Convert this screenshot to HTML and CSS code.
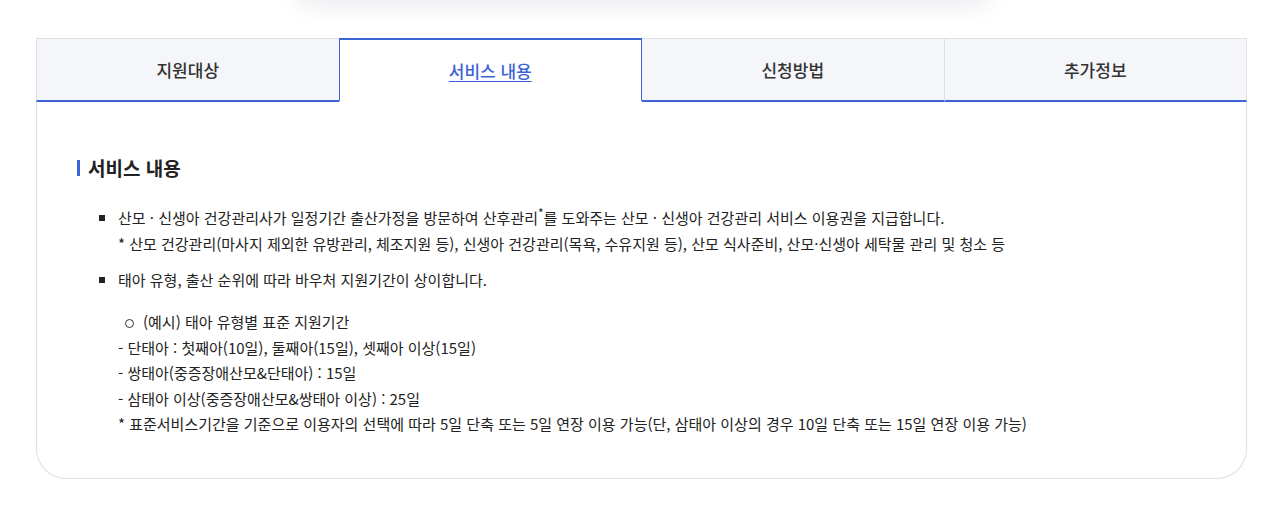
FILE: index.html
```html
<!DOCTYPE html>
<html lang="ko">

<head>
    <meta charset="UTF-8">
    <meta name="viewport" content="width=device-width, initial-scale=1.0">
    <title>서비스 내용</title>
    <link rel="stylesheet" href="styles.css">
</head>

<body>
    <div class="top-shadow"></div>

    <div class="tab-box">
        <ul class="tabs">
            <li class="tab">지원대상</li>
            <li class="tab on"><a href="#">서비스 내용</a></li>
            <li class="tab">신청방법</li>
            <li class="tab">추가정보</li>
        </ul>

        <div class="tab-cont">
            <h3 class="cont-title">서비스 내용</h3>
            <ul class="dot-list">
                <li>
                    산모 · 신생아 건강관리사가 일정기간 출산가정을 방문하여 산후관리<sup>*</sup>를 도와주는 산모 · 신생아 건강관리 서비스 이용권을 지급합니다.<br>
                    * 산모 건강관리(마사지 제외한 유방관리, 체조지원 등), 신생아 건강관리(목욕, 수유지원 등), 산모 식사준비, 산모·신생아 세탁물 관리 및 청소 등
                </li>
                <li>
                    태아 유형, 출산 순위에 따라 바우처 지원기간이 상이합니다.
                    <ul class="circle-list">
                        <li>(예시) 태아 유형별 표준 지원기간</li>
                    </ul>
                    <p>- 단태아 : 첫째아(10일), 둘째아(15일), 셋째아 이상(15일)</p>
                    <p>- 쌍태아(중증장애산모&amp;단태아) : 15일</p>
                    <p>- 삼태아 이상(중증장애산모&amp;쌍태아 이상) : 25일</p>
                    <p>* 표준서비스기간을 기준으로 이용자의 선택에 따라 5일 단축 또는 5일 연장 이용 가능(단, 삼태아 이상의 경우 10일 단축 또는 15일 연장 이용 가능)</p>
                </li>
            </ul>
        </div>
    </div>
</body>

</html>
```

FILE: styles.css
```css
* {
    box-sizing: border-box;
}

body {
    margin: 0;
    background: #fff;
    color: #222;
    font-family: "Noto Sans CJK KR", "Noto Sans", sans-serif;
    font-size: 15px;
}

/* shadow of the box that sits above */
.top-shadow {
    width: 700px;
    height: 40px;
    margin: -40px auto 0;
    border-radius: 20px;
    box-shadow: 0 6px 22px rgba(40, 40, 90, 0.09);
}

.tab-box {
    width: 1211px;
    margin: 38px 0 0 36px;
}

.tabs {
    display: flex;
    margin: 0;
    padding: 0;
    list-style: none;
}

.tab {
    flex: 1;
    height: 64px;
    display: flex;
    align-items: center;
    justify-content: center;
    background: #f5f6fa;
    border-top: 1px solid #dddfe3;
    border-left: 1px solid #dddfe3;
    border-bottom: 2px solid #3d63d8;
    color: #333;
    font-size: 17px;
    font-weight: 500;
}

.tab:last-child {
    border-right: 1px solid #dddfe3;
}

.tab.on {
    background: #fff;
    border: 1px solid #3d63d8;
    border-top-width: 2px;
    border-bottom: 2px solid #fff;
}

.tab.on + .tab {
    border-left: 0;
}

.tab.on a {
    color: #3d63d8;
    text-decoration: underline;
    text-underline-offset: 3px;
}

.tab-cont {
    border: 1px solid #dddfe3;
    border-top: 0;
    border-radius: 0 0 30px 30px;
    padding: 53px 40px 31px;
}

.cont-title {
    position: relative;
    margin: 0 0 24px;
    padding-left: 11px;
    font-size: 19px;
    font-weight: 700;
    line-height: 26px;
    color: #222;
}

.cont-title::before {
    content: "";
    position: absolute;
    left: 0;
    top: 5px;
    width: 3px;
    height: 16px;
    background: #3d63d8;
}

.dot-list {
    margin: 0;
    padding: 0 0 0 41px;
    list-style: none;
    line-height: 26px;
}

.dot-list > li {
    position: relative;
    margin-bottom: 10px;
}

.dot-list > li::before {
    content: "";
    position: absolute;
    left: -19px;
    top: 10px;
    width: 6px;
    height: 6px;
    background: #222;
}

.dot-list sup {
    font-size: 12px;
    line-height: 0;
    vertical-align: 6px;
}

.dot-list p {
    margin: 0;
    line-height: 25.4px;
}

.circle-list {
    margin: 16px 0 0;
    padding: 0 0 0 25px;
    list-style: none;
}

.circle-list li {
    position: relative;
}

.circle-list li::before {
    content: "";
    position: absolute;
    left: -18px;
    top: 10px;
    width: 7px;
    height: 7px;
    border: 1px solid #333;
    border-radius: 50%;
}
```
